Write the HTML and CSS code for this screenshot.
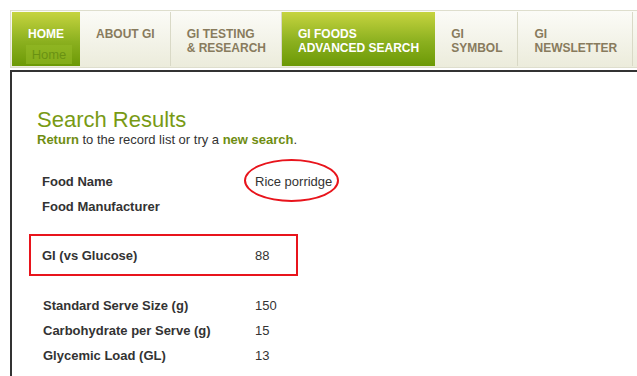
FILE: index.html
```html
<!DOCTYPE html>
<html>
<head>
<meta charset="utf-8">
<link rel="stylesheet" href="styles.css">
</head>
<body>
<nav class="nav">
  <a class="tab tab-active tab-home">HOME<span class="tooltip">Home</span></a>
  <a class="tab">ABOUT GI</a>
  <a class="tab">GI TESTING<br>&amp; RESEARCH</a>
  <a class="tab tab-active">GI FOODS<br>ADVANCED SEARCH</a>
  <a class="tab">GI<br>SYMBOL</a>
  <a class="tab">GI<br>NEWSLETTER</a>
  <a class="tab tab-empty"></a>
</nav>
<main class="content">
  <h1 class="title">Search Results</h1>
  <p class="sub"><a class="link">Return</a> to the record list or try a <a class="link">new search</a>.</p>
  <div class="group first">
    <div class="row"><span class="label">Food Name</span><span class="value circled">Rice porridge<span class="ellipse"></span></span></div>
    <div class="row"><span class="label">Food Manufacturer</span><span class="value"></span></div>
  </div>
  <div class="group boxed">
    <div class="row"><span class="label">GI (vs Glucose)</span><span class="value">88</span></div>
  </div>
  <div class="group last">
    <div class="row"><span class="label">Standard Serve Size (g)</span><span class="value">150</span></div>
    <div class="row"><span class="label">Carbohydrate per Serve (g)</span><span class="value">15</span></div>
    <div class="row"><span class="label">Glycemic Load (GL)</span><span class="value">13</span></div>
  </div>
</main>
</body>
</html>
```
FILE: styles.css
```css
html, body { margin: 0; padding: 0; background: #fff; overflow: hidden; }
body { font-family: "Liberation Sans", Arial, sans-serif; width: 637px; height: 376px; }

.nav {
  display: flex;
  box-sizing: border-box;
  margin: 10px 0 0 10px;
  width: 627px;
  border: 1px solid #dedecd;
  border-right: none;
  padding: 1px 0 1px 1px;
  background: linear-gradient(#fbfbf7, #ececdc);
  overflow: hidden;
}
.tab {
  position: relative;
  display: block;
  height: 54px;
  box-sizing: border-box;
  padding: 15px 15px 0 16px;
  font-size: 12px;
  line-height: 14px;
  font-weight: bold;
  color: #887b5d;
  background: linear-gradient(#fbfbf7, #ececdc);
  border-right: 1px solid #d9d9c6;
  white-space: nowrap;
  flex: none;
}
.tab-active {
  color: #fff;
  background: linear-gradient(#c6d43f, #8bb01f 55%, #6c9906);
  border-right: none;
  padding-right: 16px;
}
.tab-empty { flex: 1; border-right: none; padding: 0; }
.tooltip {
  position: absolute;
  left: 14px;
  top: 33px;
  width: 46px;
  height: 19px;
  background: rgba(150, 188, 40, 0.55);
  color: rgba(95, 135, 15, 0.75);
  font-weight: normal;
  font-size: 13px;
  line-height: 20px;
  text-align: center;
}

.content {
  box-sizing: border-box;
  margin: 2px 0 0 10px;
  width: 627px;
  height: 306px;
  border-top: 2px solid #333;
  border-left: 2px solid #333;
  padding: 35px 0 0 17px;
  color: #333;
}
.title {
  margin: 0 0 0 8px;
  font-size: 22px;
  line-height: 25px;
  font-weight: normal;
  color: #789a14;
}
.sub {
  margin: 0 0 0 8px;
  font-size: 13px;
  line-height: 16px;
  color: #333;
}
.link { color: #6f8d12; font-weight: bold; }

.group { width: 269px; box-sizing: border-box; padding-left: 13px; }
.group.first { margin-top: 21px; }
.boxed {
  margin-top: 15px;
  border: 2px solid #e8141c;
  padding: 7px 0 6px 11px;
}
.group.last { margin-top: 17px; padding-left: 14px; }
.row {
  display: flex;
  font-size: 13px;
  line-height: 25px;
  height: 25px;
}
.label { width: 213px; font-weight: bold; color: #333; flex: none; }
.group.last .label { width: 212px; }
.value { color: #333; white-space: nowrap; }
.circled { position: relative; }
.ellipse {
  position: absolute;
  left: -11px;
  top: -10px;
  width: 91px;
  height: 39px;
  border: 2px solid #e8141c;
  border-radius: 50%;
}
```
